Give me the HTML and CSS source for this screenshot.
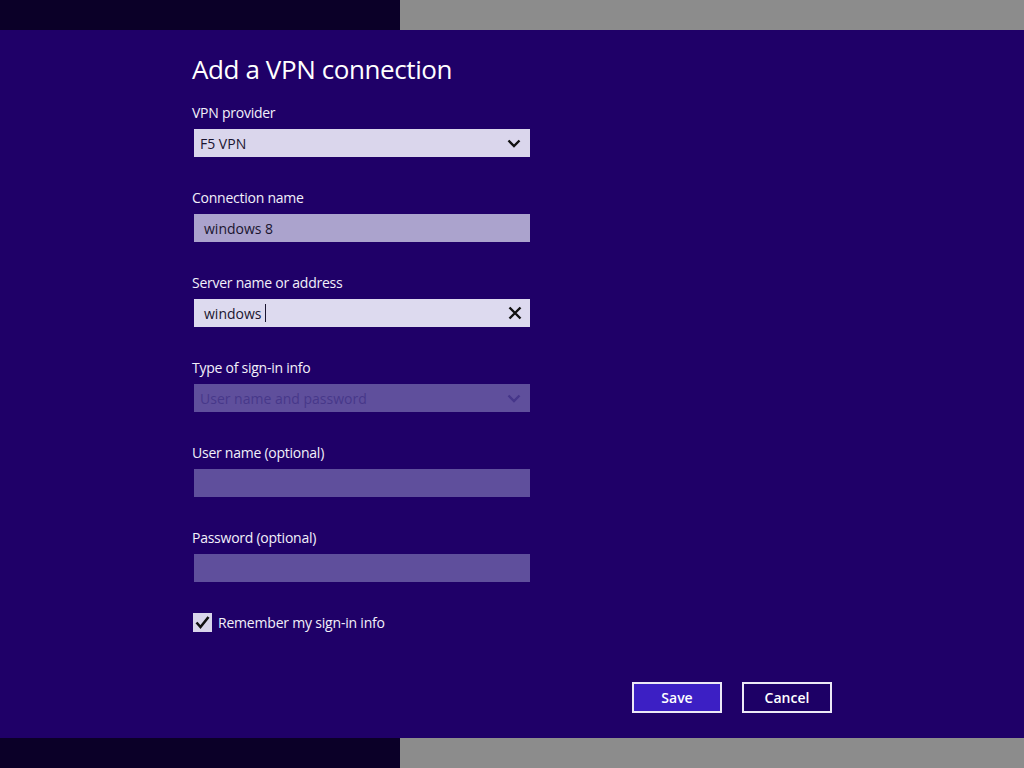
FILE: index.html
```html
<!DOCTYPE html>
<html lang="en">
<head>
<meta charset="utf-8">
<title>Add a VPN connection</title>
<link rel="stylesheet" href="styles.css">
</head>
<body>
<div class="band">
  <div class="band-dark"></div>
  <div class="band-gray"></div>
</div>
<main class="dialog">
  <div class="form">
    <h1 class="title">Add a VPN connection</h1>

    <div class="field">
      <div class="label">VPN provider</div>
      <div class="control select">
        <span class="value">F5 VPN</span>
        <svg class="chev" width="14" height="9" viewBox="0 0 14 9"><path d="M1.5 1.5 L7 7 L12.5 1.5" fill="none" stroke="#111" stroke-width="2.4"/></svg>
      </div>
    </div>

    <div class="field">
      <div class="label">Connection name</div>
      <div class="control text-mid">
        <span class="value indent">windows 8</span>
      </div>
    </div>

    <div class="field">
      <div class="label">Server name or address</div>
      <div class="control text-focus">
        <span class="value indent">windows</span><span class="caret"></span>
        <svg class="clear" width="14" height="14" viewBox="0 0 14 14"><path d="M1.5 1.5 L12.5 12.5 M12.5 1.5 L1.5 12.5" fill="none" stroke="#111" stroke-width="2.4"/></svg>
      </div>
    </div>

    <div class="field">
      <div class="label">Type of sign-in info</div>
      <div class="control disabled">
        <span class="value dim">User name and password</span>
        <svg class="chev" width="14" height="9" viewBox="0 0 14 9"><path d="M1.5 1.5 L7 7 L12.5 1.5" fill="none" stroke="#46368a" stroke-width="2.4"/></svg>
      </div>
    </div>

    <div class="field">
      <div class="label">User name (optional)</div>
      <div class="control disabled"></div>
    </div>

    <div class="field">
      <div class="label">Password (optional)</div>
      <div class="control disabled"></div>
    </div>

    <div class="check-row">
      <span class="checkbox">
        <svg width="19" height="19" viewBox="0 0 19 19"><path d="M3.5 9.5 L7.5 14 L15.5 4" fill="none" stroke="#111" stroke-width="2.6"/></svg>
      </span>
      <span class="check-label">Remember my sign-in info</span>
    </div>

    <div class="buttons">
      <button class="btn primary">Save</button>
      <button class="btn">Cancel</button>
    </div>
  </div>
</main>
<div class="band">
  <div class="band-dark"></div>
  <div class="band-gray"></div>
</div>
</body>
</html>
```

FILE: styles.css
```css
* { box-sizing: border-box; }
html, body { margin: 0; padding: 0; }
body {
  width: 1024px;
  height: 768px;
  overflow: hidden;
  background: #1f0068;
  font-family: "Open Sans", "Noto Sans", sans-serif;
  color: #ffffff;
}
.band {
  display: flex;
  height: 30px;
}
.band-dark { width: 400px; background: #0b0028; }
.band-gray { flex: 1; background: #8c8c8c; }

.dialog {
  height: 708px;
  background: #1f0068;
  padding: 21px 0 0 192px;
}
.form {
  width: 640px;
  display: flex;
  flex-direction: column;
}
.title {
  margin: 0 0 15px 0;
  font-size: 26px;
  font-weight: 400;
  line-height: 36px;
  height: 36px;
  letter-spacing: -0.4px;
}
.field {
  display: flex;
  flex-direction: column;
  margin-bottom: 30px;
}
.label {
  font-size: 14px;
  line-height: 20px;
  height: 21px;
  padding-top: 1px;
  margin-bottom: 6px;
  color: #f2f0fa;
  letter-spacing: -0.25px;
}
.control {
  width: 336px;
  height: 28px;
  margin-left: 2px;
  display: flex;
  align-items: center;
  padding: 0 8px 0 6px;
  font-size: 14px;
  color: #1a1530;
}
.select { background: #dad6ec; }
.text-mid { background: #aba3cd; }
.text-focus { background: #dddaef; }
.disabled { background: #5f4f9c; }
.value { white-space: nowrap; }
.indent { padding-left: 4px; }
.dim { color: #47388a; }
.chev { margin-left: auto; margin-right: 1px; }
.clear { margin-left: auto; margin-right: 0; }
.caret {
  display: inline-block;
  width: 1px;
  height: 18px;
  background: #1a1530;
  margin-left: 4px;
}
.check-row {
  display: flex;
  align-items: center;
  height: 20px;
}
.checkbox {
  width: 19px;
  height: 19px;
  margin-left: 1px;
  background: #d9d5eb;
  display: flex;
}
.check-label {
  margin-left: 6px;
  font-size: 14px;
  color: #f2f0fa;
  letter-spacing: -0.2px;
}
.buttons {
  display: flex;
  justify-content: flex-end;
  gap: 20px;
  margin-top: 50px;
}
.btn {
  width: 90px;
  height: 31px;
  border: 2px solid #ece8f6;
  background: #1d0066;
  color: #ffffff;
  font-family: "Open Sans", "Noto Sans", sans-serif;
  font-weight: 600;
  font-size: 14px;
  padding: 0;
}
.btn.primary { background: #3c1fc4; }
```
